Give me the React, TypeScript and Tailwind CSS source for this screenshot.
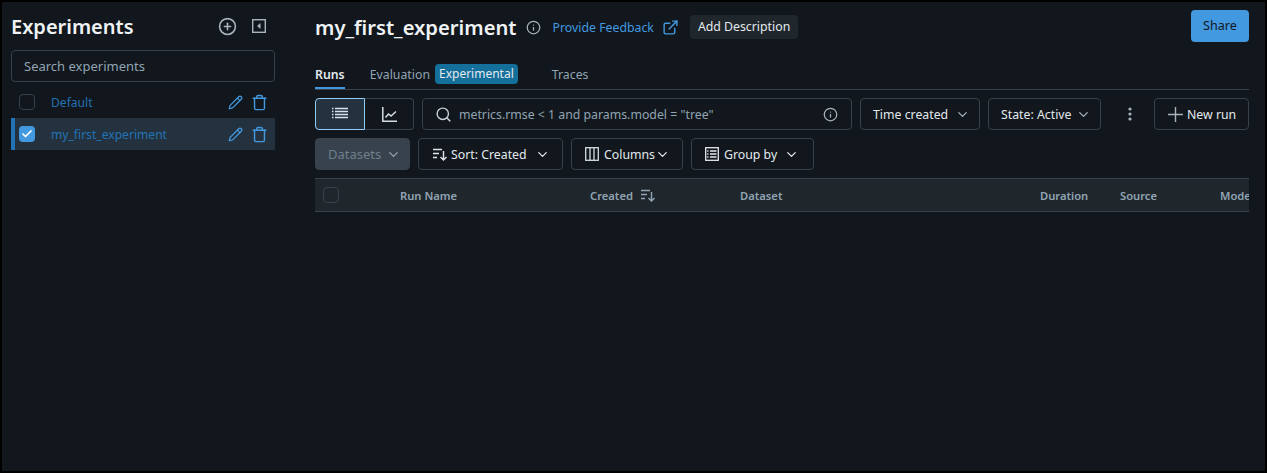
import React from 'react';
import { Check, ChevronDown, CirclePlus, ExternalLink, Info, Pencil, Search, Trash } from 'lucide-react';

const font = "font-['Noto_Sans','Liberation_Sans',sans-serif]";

const ToolButton: React.FC<{ className: string; children: React.ReactNode }> = ({ className, children }) => (
    <button className={`h-8 flex items-center rounded-[4px] border border-[#37424d] text-[12.3px] text-[#e4e9ee] ${className}`}>
        {children}
    </button>
);

const Label: React.FC<{ children: React.ReactNode }> = ({ children }) => <span className="pt-[2px]">{children}</span>;

const SortIcon = ({ color = '#dfe5ea' }: { color?: string }) => (
    <svg width="16" height="16" viewBox="0 0 16 16" fill="none" stroke={color} strokeWidth="1.4">
        <path d="M1 3.5h9M1 7.5h6M1 11.5h4" />
        <path d="M11.5 5v9M8.5 11l3 3 3-3" />
    </svg>
);

const ChartIcon = () => (
    <svg width="15" height="15" viewBox="0 0 15 15" fill="none" stroke="#d5dde3" strokeWidth="1.5">
        <path d="M0.8 0v14.2H15" />
        <path d="M3.5 10.5l3-3.5 2.5 2L14 4.5" />
    </svg>
);

const ListIcon = () => (
    <svg width="16" height="14" viewBox="0 0 16 14" fill="none" stroke="#d5e3ee" strokeWidth="1.3">
        <path d="M3 1.5h13M3 4.5h13M3 7.5h13M3 10.5h13M0 1.5h1.5M0 4.5h1.5M0 7.5h1.5M0 10.5h1.5" />
    </svg>
);

const GroupIcon = () => (
    <svg width="14" height="14" viewBox="0 0 14 14" fill="none" stroke="#e4e9ee" strokeWidth="1.3">
        <rect x="0.7" y="0.7" width="12.6" height="12.6" />
        <path d="M5 4h6.5M5 7h6.5M5 10h6.5M2.2 4h1.3M2.2 7h1.3M2.2 10h1.3" />
    </svg>
);

const ColumnsIcon = () => (
    <svg width="14" height="14" viewBox="0 0 14 14" fill="none" stroke="#d5dde3" strokeWidth="1.3">
        <rect x="0.7" y="0.7" width="12.6" height="12.6" />
        <path d="M5 0.7v12.6M9 0.7v12.6" />
    </svg>
);

const CollapseIcon = () => (
    <svg width="14" height="14" viewBox="0 0 14 14" fill="none">
        <rect x="0.7" y="0.7" width="12.6" height="12.6" stroke="#a9b4bd" strokeWidth="1.4" />
        <path d="M8.5 4v6L5 7z" fill="#a9b4bd" />
    </svg>
);

const PlusIcon = () => (
    <svg width="15" height="15" viewBox="0 0 15 15" fill="none" stroke="#a9b4bd" strokeWidth="1.4">
        <path d="M7.5 0v15M0 7.5h15" />
    </svg>
);

const KebabIcon = () => (
    <svg width="4" height="14" viewBox="0 0 4 14" fill="#a9b4bd">
        <circle cx="2" cy="2" r="1.6" />
        <circle cx="2" cy="7" r="1.6" />
        <circle cx="2" cy="12" r="1.6" />
    </svg>
);

const ExperimentRow: React.FC<{ name: string; selected?: boolean }> = ({ name, selected = false }) => (
    <div className={`h-8 flex items-center pr-[7px] border-l-4 ${selected ? 'bg-[#24323f] border-[#2272b4]' : 'border-transparent'}`}>
        <span className={`ml-[4px] w-4 h-4 shrink-0 flex items-center justify-center rounded-[4px] ${selected ? 'bg-[#4299e0]' : 'border border-[#37424d]'}`}>
            {selected && <Check size={12} color="#ffffff" strokeWidth={3.5} />}
        </span>
        <span className="ml-[16px] pt-[2px] flex-1 text-[12.1px] text-[#2272b4]">{name}</span>
        <Pencil size={15} color="#4299e0" className="mr-[8px]" />
        <Trash size={17} color="#4299e0" />
    </div>
);

export default function App() {
    return (
        <div className={`w-[1267px] h-[473px] overflow-hidden bg-[#11171c] border-2 border-black flex ${font}`}>
            <aside className="w-[273px] shrink-0 pl-[9px]">
                <div className="flex items-center h-[48px]">
                    <h1 className="flex-1 pt-[2px] text-[20px] font-semibold text-[#f0f3f5]">Experiments</h1>
                    <CirclePlus size={19} color="#a9b4bd" className="mr-[15px]" />
                    <span className="mr-[9px]"><CollapseIcon /></span>
                </div>
                <div className="h-8 flex items-center pt-[1px] px-[12px] rounded-[4px] border border-[#37424d] text-[13px] text-[#92a4b3]">Search experiments</div>
                <div className="mt-[4px]">
                    <ExperimentRow name="Default" />
                    <ExperimentRow name="my_first_experiment" selected />
                </div>
            </aside>
            <main className="ml-[40px] w-[934px] shrink-0">
                <div className="flex items-center h-[48px] pt-[2px]">
                    <h2 className="text-[20.2px] font-semibold text-[#f0f3f5]">my_first_experiment</h2>
                    <Info size={15} color="#a9b4bd" className="ml-[9px]" />
                    <span className="ml-[12px] pt-[2px] text-[12.3px] text-[#4299e0]">Provide Feedback</span>
                    <ExternalLink size={17} color="#4299e0" className="ml-[8px]" />
                    <span className="ml-[11px] h-6 px-[8px] pt-[1px] flex items-center rounded-[4px] bg-[#1f272d] text-[12.3px] text-[#e4e9ee]">Add Description</span>
                    <button className="ml-auto self-start mt-[6px] w-[58px] h-8 rounded-[4px] bg-[#4299e0] text-[12.6px] text-[#11171c]">Share</button>
                </div>
                <div className="flex h-[40px] items-end border-b border-[#37424d] text-[12.3px] text-[#92a4b3]">
                    <span className="h-[26px] pt-[3px] border-b-[2px] border-[#4299e0] font-semibold text-[#e4e9ee]">Runs</span>
                    <span className="ml-[25px] h-[26px] pt-[3px]">Evaluation</span>
                    <span className="ml-[5px] mb-[5px] h-5 px-[4px] flex items-center rounded-[4px] bg-[#156f9b] text-[12px] text-[#e4e9ee]">Experimental</span>
                    <span className="ml-[34px] h-[26px] pt-[3px]">Traces</span>
                </div>
                <div className="mt-[8px] flex gap-[8px]">
                    <div className="flex">
                        <span className="w-[50px] h-8 flex items-center justify-center rounded-l-[4px] border border-[#8fcdff] bg-[#24323f]"><ListIcon /></span>
                        <span className="w-[49px] h-8 flex items-center justify-center rounded-r-[4px] border border-l-0 border-[#37424d]"><ChartIcon /></span>
                    </div>
                    <div className="w-[430px] h-8 flex items-center pl-[12px] pr-[13px] rounded-[4px] border border-[#37424d] text-[12.3px] text-[#92a4b3]">
                        <Search size={17} color="#c8d1d9" className="mr-[7px]" />
                        <span className="flex-1 pt-[2px]">metrics.rmse &lt; 1 and params.model = "tree"</span>
                        <Info size={15} color="#a9b4bd" />
                    </div>
                    <ToolButton className="w-[120px] pl-[12px]"><Label>Time created</Label><ChevronDown size={15} color="#a9b4bd" className="ml-[7px]" /></ToolButton>
                    <ToolButton className="w-[113px] pl-[12px]"><Label>State: Active</Label><ChevronDown size={15} color="#a9b4bd" className="ml-[4px]" /></ToolButton>
                    <span className="w-[37px] h-8 pl-[5px] flex items-center justify-center"><KebabIcon /></span>
                    <ToolButton className="w-[95px] pl-[13px]"><span className="mr-[4px]"><PlusIcon /></span><Label>New run</Label></ToolButton>
                </div>
                <div className="mt-[8px] flex gap-[8px]">
                    <span className="w-[95px] h-8 flex items-center pl-[12px] rounded-[4px] border border-[#37424d] bg-[#37424d] text-[13px] text-[#6f7f8c]"><Label>Datasets</Label><ChevronDown size={15} color="#92a4b3" className="ml-[5px]" /></span>
                    <ToolButton className="w-[145px] pl-[13px]"><span className="mr-[3px]"><SortIcon /></span><Label>Sort: Created</Label><ChevronDown size={15} className="ml-[8px]" /></ToolButton>
                    <ToolButton className="w-[112px] pl-[13px]"><span className="mr-[5px]"><ColumnsIcon /></span><Label>Columns</Label><ChevronDown size={15} /></ToolButton>
                    <ToolButton className="w-[123px] pl-[13px]"><span className="mr-[5px]"><GroupIcon /></span><Label>Group by</Label><ChevronDown size={15} className="ml-[7px]" /></ToolButton>
                </div>
                <div className="mt-[8px] h-[34px] flex items-center overflow-hidden border-y border-[#37424d] bg-[#1f272d] text-[11.2px] font-semibold text-[#92a4b3] whitespace-nowrap">
                    <span className="ml-[8px] w-4 h-4 rounded-[4px] border border-[#37424d] shrink-0" />
                    <span className="ml-[61px] pt-[2px] w-[190px] shrink-0">Run Name</span>
                    <span className="w-[150px] shrink-0 flex items-center"><Label>Created</Label><span className="ml-[7px]"><SortIcon color="#92a4b3" /></span></span>
                    <span className="w-[300px] pt-[2px] shrink-0">Dataset</span>
                    <span className="w-[80px] pt-[2px] shrink-0">Duration</span>
                    <span className="w-[100px] pt-[2px] shrink-0">Source</span>
                    <span className="pt-[2px] shrink-0">Models</span>
                </div>
            </main>
        </div>
    );
}
